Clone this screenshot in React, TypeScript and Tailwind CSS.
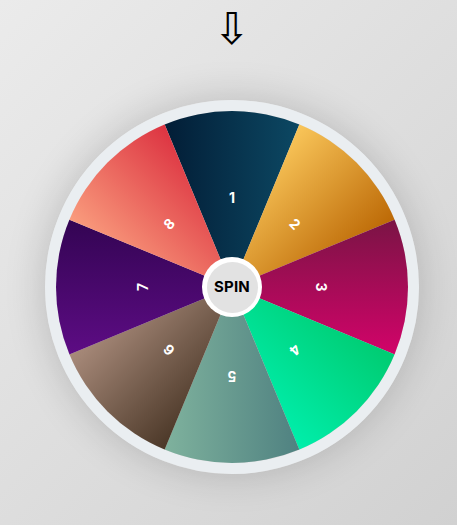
import React from "react";

const segments = [
  { id: 1, clip: "[clip-path:polygon(50%_50%,23.21%_-14.67%,76.79%_-14.67%)]", bg: "bg-[linear-gradient(to_right,#021c35_30%,#0c4964_70%)]" },
  { id: 2, clip: "[clip-path:polygon(50%_50%,76.79%_-14.67%,114.67%_23.21%)]", bg: "bg-[linear-gradient(135deg,#fac75b_36%,#bb6704_64%)]" },
  { id: 3, clip: "[clip-path:polygon(50%_50%,114.67%_23.21%,114.67%_76.79%)]", bg: "bg-[linear-gradient(to_bottom,#781444_30%,#d4036a_70%)]" },
  { id: 4, clip: "[clip-path:polygon(50%_50%,114.67%_76.79%,76.79%_114.67%)]", bg: "bg-[linear-gradient(225deg,#00cd74_38%,#00efac_64%)]" },
  { id: 5, clip: "[clip-path:polygon(50%_50%,76.79%_114.67%,23.21%_114.67%)]", bg: "bg-[linear-gradient(to_right,#80b39e_30%,#4e8080_70%)]" },
  { id: 6, clip: "[clip-path:polygon(50%_50%,23.21%_114.67%,-14.67%_76.79%)]", bg: "bg-[linear-gradient(135deg,#aa8c7c_36%,#493626_64%)]" },
  { id: 7, clip: "[clip-path:polygon(50%_50%,-14.67%_76.79%,-14.67%_23.21%)]", bg: "bg-[linear-gradient(to_bottom,#320452_30%,#5e0c85_70%)]" },
  { id: 8, clip: "[clip-path:polygon(50%_50%,-14.67%_23.21%,23.21%_-14.67%)]", bg: "bg-[linear-gradient(45deg,#fa9e7e_36%,#dc3140_64%)]" },
];

const labelTurns = [
  "rotate-0",
  "rotate-[45deg]",
  "rotate-[90deg]",
  "rotate-[135deg]",
  "rotate-[180deg]",
  "rotate-[225deg]",
  "rotate-[270deg]",
  "rotate-[315deg]",
];

export default function App() {
  return (
    <div className="min-h-screen w-full pl-[7px] flex flex-col items-center bg-[linear-gradient(135deg,#ebebeb,#d1d1d1)] font-['Inter',sans-serif]">
      {/* POINTER */}
      <div className="mt-[6px] h-[46px] text-[44px] leading-[46px] text-black font-['DejaVu_Sans',sans-serif]">
        ⇩
      </div>

      {/* WHEEL */}
      <div className="mt-[48px] w-[374px] h-[374px] rounded-full border-[11px] border-[#eaeef1] shadow-[0_0_40px_rgba(0,0,0,0.18)] overflow-hidden relative">
        {segments.map((seg) => (
          <div key={seg.id} className={`absolute inset-0 ${seg.clip} ${seg.bg}`} />
        ))}

        {segments.map((seg, i) => (
          <div
            key={`label-${seg.id}`}
            className={`absolute inset-0 flex justify-center pt-[77px] ${labelTurns[i]}`}
          >
            <span className="text-white text-[14px] leading-[20px] font-bold">{seg.id}</span>
          </div>
        ))}

        {/* SPIN BUTTON */}
        <div className="absolute inset-0 flex items-center justify-center">
          <div className="w-[60px] h-[60px] rounded-full bg-white flex items-center justify-center">
            <div className="w-[51px] h-[51px] rounded-full bg-[#e2e2e2] flex items-center justify-center">
              <span className="text-black text-[15px] font-bold tracking-[0.2px]">SPIN</span>
            </div>
          </div>
        </div>
      </div>
    </div>
  );
}
